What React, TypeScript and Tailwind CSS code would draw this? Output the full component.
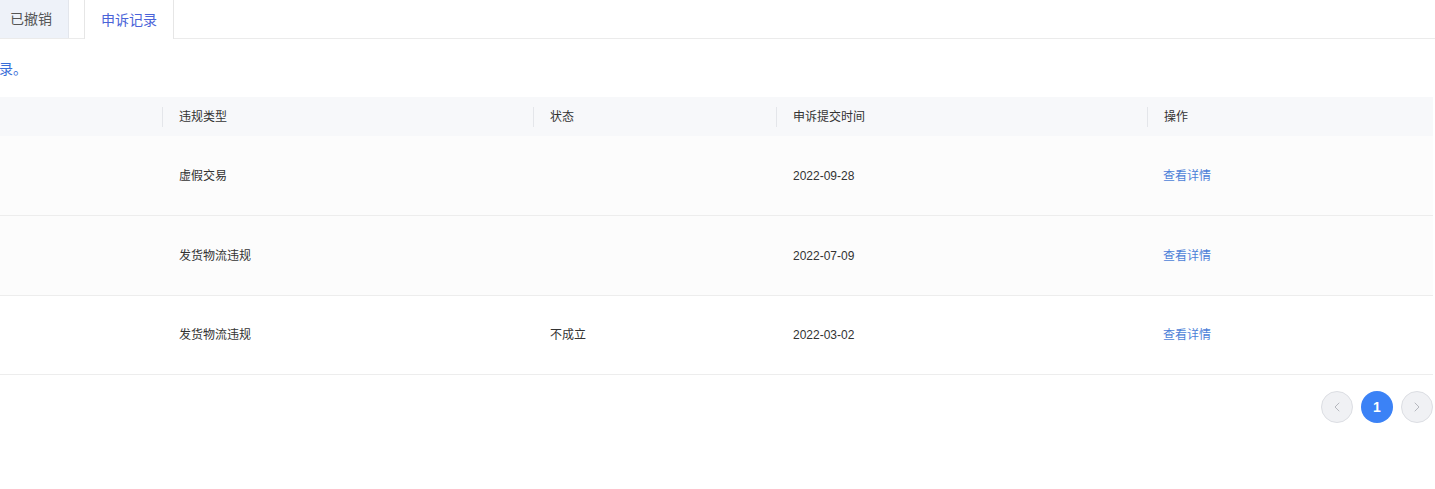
import { ChevronLeft, ChevronRight } from "lucide-react";

type Record = {
  id: number;
  type: string;
  status: string;
  date: string;
  shaded: boolean;
};

const records: Record[] = [
  { id: 1, type: "虚假交易", status: "", date: "2022-09-28", shaded: true },
  { id: 2, type: "发货物流违规", status: "", date: "2022-07-09", shaded: true },
  { id: 3, type: "发货物流违规", status: "不成立", date: "2022-03-02", shaded: false },
];

const cols = "grid grid-cols-[162px_371px_243px_371px_286px]";

export default function App() {
  return (
    <div
      className="w-[1435px] h-[489px] overflow-hidden bg-white text-[#333]"
      style={{ fontFamily: '"Liberation Sans", "Noto Sans CJK SC", sans-serif' }}
    >
      {/* tabs */}
      <div className="flex h-[39px] border-b border-[#ebebeb]">
        <div className="-ml-[6px] flex h-[38px] items-center bg-[#eef2f9] border-r border-[#e3e6ec] px-4 text-sm text-[#555]">
          已撤销
        </div>
        <div className="ml-[15px] flex h-[39px] -mb-px items-center bg-white border-x border-[#e6e6e6] px-4 text-sm text-[#4a63d8]">
          申诉记录
        </div>
      </div>

      {/* notice */}
      <div className="-ml-[141px] mt-[20px] h-5 text-sm leading-5 text-[#3a6fd8] whitespace-nowrap">
        仅展示近一年的申诉记录。
      </div>

      {/* table */}
      <div className="mt-[18px] w-[1433px]">
        <div className={`${cols} h-[39px] bg-[#f7f8fa] text-xs text-[#333]`}>
          <div />
          {["违规类型", "状态", "申诉提交时间", "操作"].map((h, i) => (
            <div key={h} className={`flex items-center ${i === 0 ? "rounded-tl-[5px]" : ""}`}>
              <span className="h-5 w-px bg-[#e4e6ea]" />
              <span className="pl-4">{h}</span>
            </div>
          ))}
        </div>
        {records.map((r) => (
          <div
            key={r.id}
            className={`${cols} items-center border-b border-[#ededed] text-xs ${
              r.shaded ? "h-[80px] bg-[#fcfcfc]" : "h-[79px] bg-white"
            }`}
          >
            <div />
            <div className="pl-[17px]">{r.type}</div>
            <div className="pl-[17px]">{r.status}</div>
            <div className="pl-[17px]">{r.date}</div>
            <div className="pl-[16px] text-[#4d7fd8]">查看详情</div>
          </div>
        ))}
      </div>

      {/* pagination */}
      <div className="mt-4 flex w-[1433px] justify-end gap-2">
        <button className="flex h-8 w-8 items-center justify-center rounded-full border border-[#dcdee3] bg-[#f0f1f4] text-[#a9acb3]">
          <ChevronLeft size={16} strokeWidth={1.25} />
        </button>
        <button className="flex h-8 w-8 items-center justify-center rounded-full bg-[#3b82f6] text-sm font-bold text-white">
          1
        </button>
        <button className="flex h-8 w-8 items-center justify-center rounded-full border border-[#dcdee3] bg-[#f0f1f4] text-[#a9acb3]">
          <ChevronRight size={16} strokeWidth={1.25} />
        </button>
      </div>
    </div>
  );
}
